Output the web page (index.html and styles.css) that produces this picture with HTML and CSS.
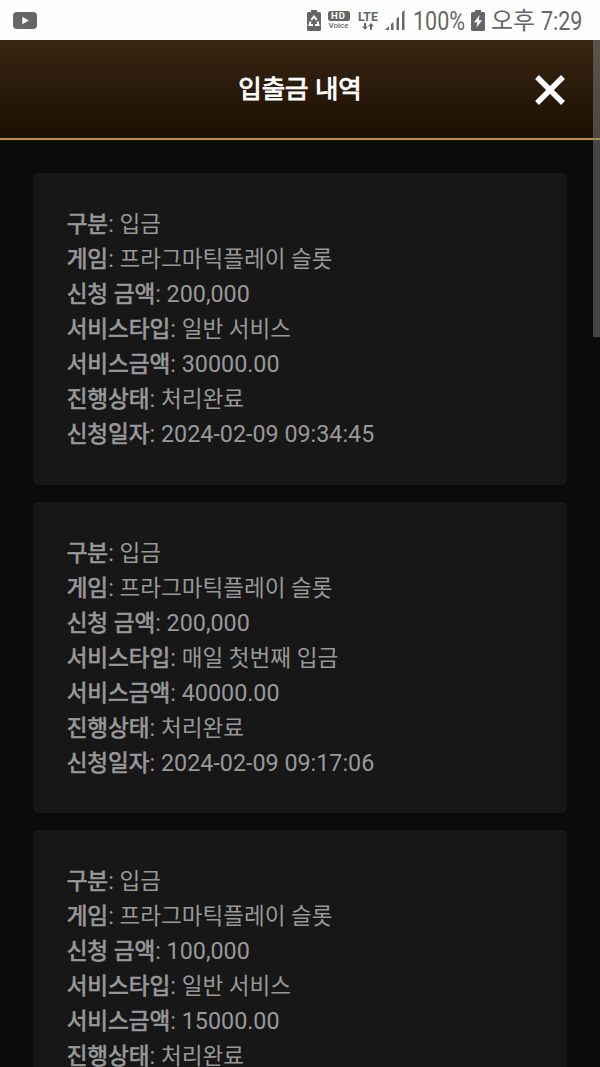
FILE: index.html
```html
<!DOCTYPE html>
<html lang="ko">
<head>
<meta charset="utf-8">
<title>입출금 내역</title>
<link rel="stylesheet" href="styles.css">
</head>
<body>
<div class="status">
  <svg class="youtube" width="24" height="17" viewBox="0 0 24 17"><rect width="24" height="17" rx="4" fill="#666"/><path d="M9.3 4.8v7.4l6.5-3.7z" fill="#fff"/></svg>
  <div class="status-right">
    <svg class="saver" width="14" height="21" viewBox="0 0 14 21"><path d="M4 0h6v2h2.500a1.500 1.500 0 0 1 1.500 1.500v16a1.500 1.500 0 0 1-1.500 1.500h-11A1.500 1.500 0 0 1 0 19.500v-16A1.500 1.500 0 0 1 1.500 2H4z" fill="#666"/><path d="M4.300 9.800 7 6.500l2.700 3.300M10.500 11.500l1 3.500H8M6 15H2.500L3.500 11.500" fill="none" stroke="#fff" stroke-width="1.900"/></svg>
    <div class="hd"><span class="hd-badge">HD</span><span class="hd-voice">Voice</span></div>
    <div class="lte"><span class="lte-text">LTE</span><svg width="12" height="7" viewBox="0 0 12 7"><path d="M2 0h2v3.500h2L3 6.800 0 3.500h2zM8 6.800h2V3.300h2L9 0 6 3.300h2z" fill="#666"/></svg></div>
    <svg class="signal" width="20" height="20" viewBox="0 0 20 20"><path d="M0 20l4-4v4zM6 14l2.500-2V20H6zM11.500 8.500l2.500-2V20h-2.500zM17 2.200l2.500-2.200v20H17z" fill="#666"/></svg>
    <span class="percent">100%</span>
    <svg class="battery" width="14" height="21" viewBox="0 0 14 21"><path d="M4 0h6v2h2.500a1.500 1.500 0 0 1 1.500 1.500v16a1.500 1.500 0 0 1-1.500 1.500h-11A1.500 1.500 0 0 1 0 19.500v-16A1.500 1.500 0 0 1 1.500 2H4z" fill="#666"/><path d="M8.600 5 3 12.300h3.300L5.500 17.500 11 10.200H7.800z" fill="#fff"/></svg>
    <span class="meridiem">오후</span><span class="time">7:29</span>
  </div>
</div>
<header class="header">
  <h1 class="title">입출금 내역</h1>
  <svg class="close" width="30" height="30" viewBox="0 0 30 30"><path d="M2 2l26 26M28 2L2 28" stroke="#fff" stroke-width="5.400"/></svg>
</header>
<main class="list">
  <section class="card">
    <p><b>구분</b>: <span>입금</span></p>
    <p><b>게임</b>: <span>프라그마틱플레이 슬롯</span></p>
    <p><b>신청 금액</b>: 200,000</p>
    <p><b>서비스타입</b>: <span>일반 서비스</span></p>
    <p><b>서비스금액</b>: 30000.00</p>
    <p><b>진행상태</b>: <span>처리완료</span></p>
    <p><b>신청일자</b>: 2024-02-09 09:34:45</p>
  </section>
  <section class="card">
    <p><b>구분</b>: <span>입금</span></p>
    <p><b>게임</b>: <span>프라그마틱플레이 슬롯</span></p>
    <p><b>신청 금액</b>: 200,000</p>
    <p><b>서비스타입</b>: <span>매일 첫번째 입금</span></p>
    <p><b>서비스금액</b>: 40000.00</p>
    <p><b>진행상태</b>: <span>처리완료</span></p>
    <p><b>신청일자</b>: 2024-02-09 09:17:06</p>
  </section>
  <section class="card">
    <p><b>구분</b>: <span>입금</span></p>
    <p><b>게임</b>: <span>프라그마틱플레이 슬롯</span></p>
    <p><b>신청 금액</b>: 100,000</p>
    <p><b>서비스타입</b>: <span>일반 서비스</span></p>
    <p><b>서비스금액</b>: 15000.00</p>
    <p><b>진행상태</b>: <span>처리완료</span></p>
  </section>
</main>
<div class="scrollbar"></div>
</body>
</html>
```
FILE: styles.css
```css
* { box-sizing: border-box; }
body {
  margin: 0;
  height: 1067px;
  overflow: hidden;
  position: relative;
  display: flex;
  flex-direction: column;
  background: #0b0b0b;
  font-family: Roboto, "Noto Sans CJK KR", sans-serif;
}
.status {
  height: 40px;
  flex: none;
  display: flex;
  justify-content: space-between;
  align-items: center;
  padding: 0 17px 0 13px;
  background: #fefefe;
  color: #666;
}
.status-right { display: flex; align-items: center; height: 40px; }
.saver { margin-right: 6px; }
.hd { width: 23px; display: flex; flex-direction: column; align-items: center; }
.hd-badge {
  width: 22px;
  height: 10px;
  border-radius: 2.5px;
  background: #666;
  color: #fff;
  font: bold 9.5px/10px Roboto, sans-serif;
  letter-spacing: 1px;
  text-align: center;
}
.hd-voice { font: 500 8px/9px Roboto, sans-serif; }
.lte { width: 22px; margin: 0 6px 0 7px; display: flex; flex-direction: column; align-items: center; }
.lte-text { font: bold 12.5px/12px Roboto, sans-serif; }
.signal { margin-right: 8px; }
.percent, .time {
  font-size: 25px;
  line-height: 40px;
  white-space: nowrap;
  transform-origin: left center;
  transform: scaleX(0.86);
  padding-top: 3px;
}
.percent { width: 51px; margin-right: 7px; }
.battery { margin-right: 6px; }
.meridiem { font-size: 24px; line-height: 40px; width: 50px; padding-top: 2px; }
.time { width: 42px; }
.header {
  height: 100px;
  flex: none;
  display: grid;
  grid-template-columns: 65px 1fr 65px;
  align-items: center;
  background: linear-gradient(#392613, #1a0f01);
  border-bottom: 2px solid #c18e43;
}
.title {
  grid-column: 2;
  margin: 0;
  text-align: center;
  color: #fff;
  font-size: 25.5px;
  line-height: 38px;
  font-weight: 400;
  -webkit-text-stroke: 0.9px #fff;
}
.close { margin-top: 2px; }
.list {
  flex: none;
  padding: 33.45px 33.3px;
  display: flex;
  flex-direction: column;
  gap: 16.75px;
}
.card {
  padding: 33.9px 33.33px 32.76px;
  border-radius: 5px;
  background: #171717;
  color: #999;
}
.card p {
  margin: 0;
  height: 35px;
  font-size: 23.3px;
  line-height: 35px;
  white-space: nowrap;
}
.card b, .card span { font-size: 22.55px; line-height: 1; }
.card b { font-weight: 400; -webkit-text-stroke: 0.7px #999; }
.scrollbar {
  position: absolute;
  right: 0;
  top: 40px;
  width: 7px;
  height: 297px;
  background: rgba(128, 128, 128, 0.5);
}
```
